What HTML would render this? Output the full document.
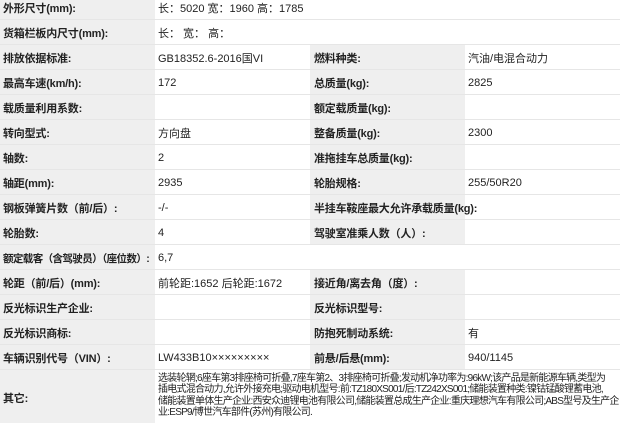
<!DOCTYPE html>
<html><head><meta charset="utf-8"><style>
*{margin:0;padding:0;box-sizing:border-box}
body{width:620px;height:423px;overflow:hidden;background:#fff;font-family:"Liberation Sans","Noto Sans CJK SC",sans-serif;font-size:11px;color:#222}
.r{position:absolute;left:0;width:620px;height:25px;border-bottom:1px solid #e6e6e6}
.c{position:absolute;top:0;height:100%;display:flex;align-items:center;padding-left:3px;padding-top:2px;white-space:nowrap;overflow:hidden}
.l1{left:0;width:155px;background:#efefef;font-weight:bold;letter-spacing:-0.2px}
.v1{left:155px;width:155px}
.l2{left:310px;width:155px;background:#efefef;font-weight:bold;padding-left:4px;overflow:visible;letter-spacing:-0.2px}
.v2{left:465px;width:155px}
.vw{left:155px;width:465px}
.p{font-size:10px;line-height:11.4px;display:block;padding-top:1px;white-space:nowrap;letter-spacing:-0.75px}
</style></head><body>
<div class="r" style="top:-5px"><div class="c l1">外形尺寸(mm):</div><div class="c vw">长：5020 宽：1960 高：1785</div></div>
<div class="r" style="top:20px"><div class="c l1">货箱栏板内尺寸(mm):</div><div class="c vw">长： 宽： 高：</div></div>
<div class="r" style="top:45px"><div class="c l1">排放依据标准:</div><div class="c v1">GB18352.6-2016国VI</div><div class="c l2">燃料种类:</div><div class="c v2">汽油/电混合动力</div></div>
<div class="r" style="top:70px"><div class="c l1">最高车速(km/h):</div><div class="c v1">172</div><div class="c l2">总质量(kg):</div><div class="c v2">2825</div></div>
<div class="r" style="top:95px"><div class="c l1">载质量利用系数:</div><div class="c v1"></div><div class="c l2">额定载质量(kg):</div><div class="c v2"></div></div>
<div class="r" style="top:120px"><div class="c l1">转向型式:</div><div class="c v1">方向盘</div><div class="c l2">整备质量(kg):</div><div class="c v2">2300</div></div>
<div class="r" style="top:145px"><div class="c l1">轴数:</div><div class="c v1">2</div><div class="c l2">准拖挂车总质量(kg):</div><div class="c v2"></div></div>
<div class="r" style="top:170px"><div class="c l1">轴距(mm):</div><div class="c v1">2935</div><div class="c l2">轮胎规格:</div><div class="c v2">255/50R20</div></div>
<div class="r" style="top:195px"><div class="c l1">钢板弹簧片数（前/后）:</div><div class="c v1">-/-</div><div class="c l2">半挂车鞍座最大允许承载质量(kg):</div><div class="c v2"></div></div>
<div class="r" style="top:220px"><div class="c l1">轮胎数:</div><div class="c v1">4</div><div class="c l2">驾驶室准乘人数（人）:</div><div class="c v2"></div></div>
<div class="r" style="top:245px"><div class="c l1" style="letter-spacing:-0.6px;font-size:10.5px">额定载客（含驾驶员）（座位数）:</div><div class="c vw">6,7</div></div>
<div class="r" style="top:270px"><div class="c l1">轮距（前/后）(mm):</div><div class="c v1">前轮距:1652 后轮距:1672</div><div class="c l2">接近角/离去角（度）:</div><div class="c v2"></div></div>
<div class="r" style="top:295px"><div class="c l1">反光标识生产企业:</div><div class="c v1"></div><div class="c l2">反光标识型号:</div><div class="c v2"></div></div>
<div class="r" style="top:320px"><div class="c l1">反光标识商标:</div><div class="c v1"></div><div class="c l2">防抱死制动系统:</div><div class="c v2">有</div></div>
<div class="r" style="top:345px"><div class="c l1">车辆识别代号（VIN）:</div><div class="c v1">LW433B10×××××××××</div><div class="c l2">前悬/后悬(mm):</div><div class="c v2">940/1145</div></div>
<div class="r" style="top:370px;height:53px;border:none"><div class="c l1">其它:</div><div class="c vw" style="display:block"><span class="p">选装轮辋;6座车第3排座椅可折叠,7座车第2、3排座椅可折叠;发动机净功率为:96kW;该产品是新能源车辆,类型为<br>插电式混合动力,允许外接充电;驱动电机型号:前:TZ180XS001/后:TZ242XS001;储能装置种类:镍钴锰酸锂蓄电池,<br>储能装置单体生产企业:西安众迪锂电池有限公司,储能装置总成生产企业:重庆理想汽车有限公司;ABS型号及生产企<br>业:ESP9/博世汽车部件(苏州)有限公司.</span></div></div>
</body></html>
